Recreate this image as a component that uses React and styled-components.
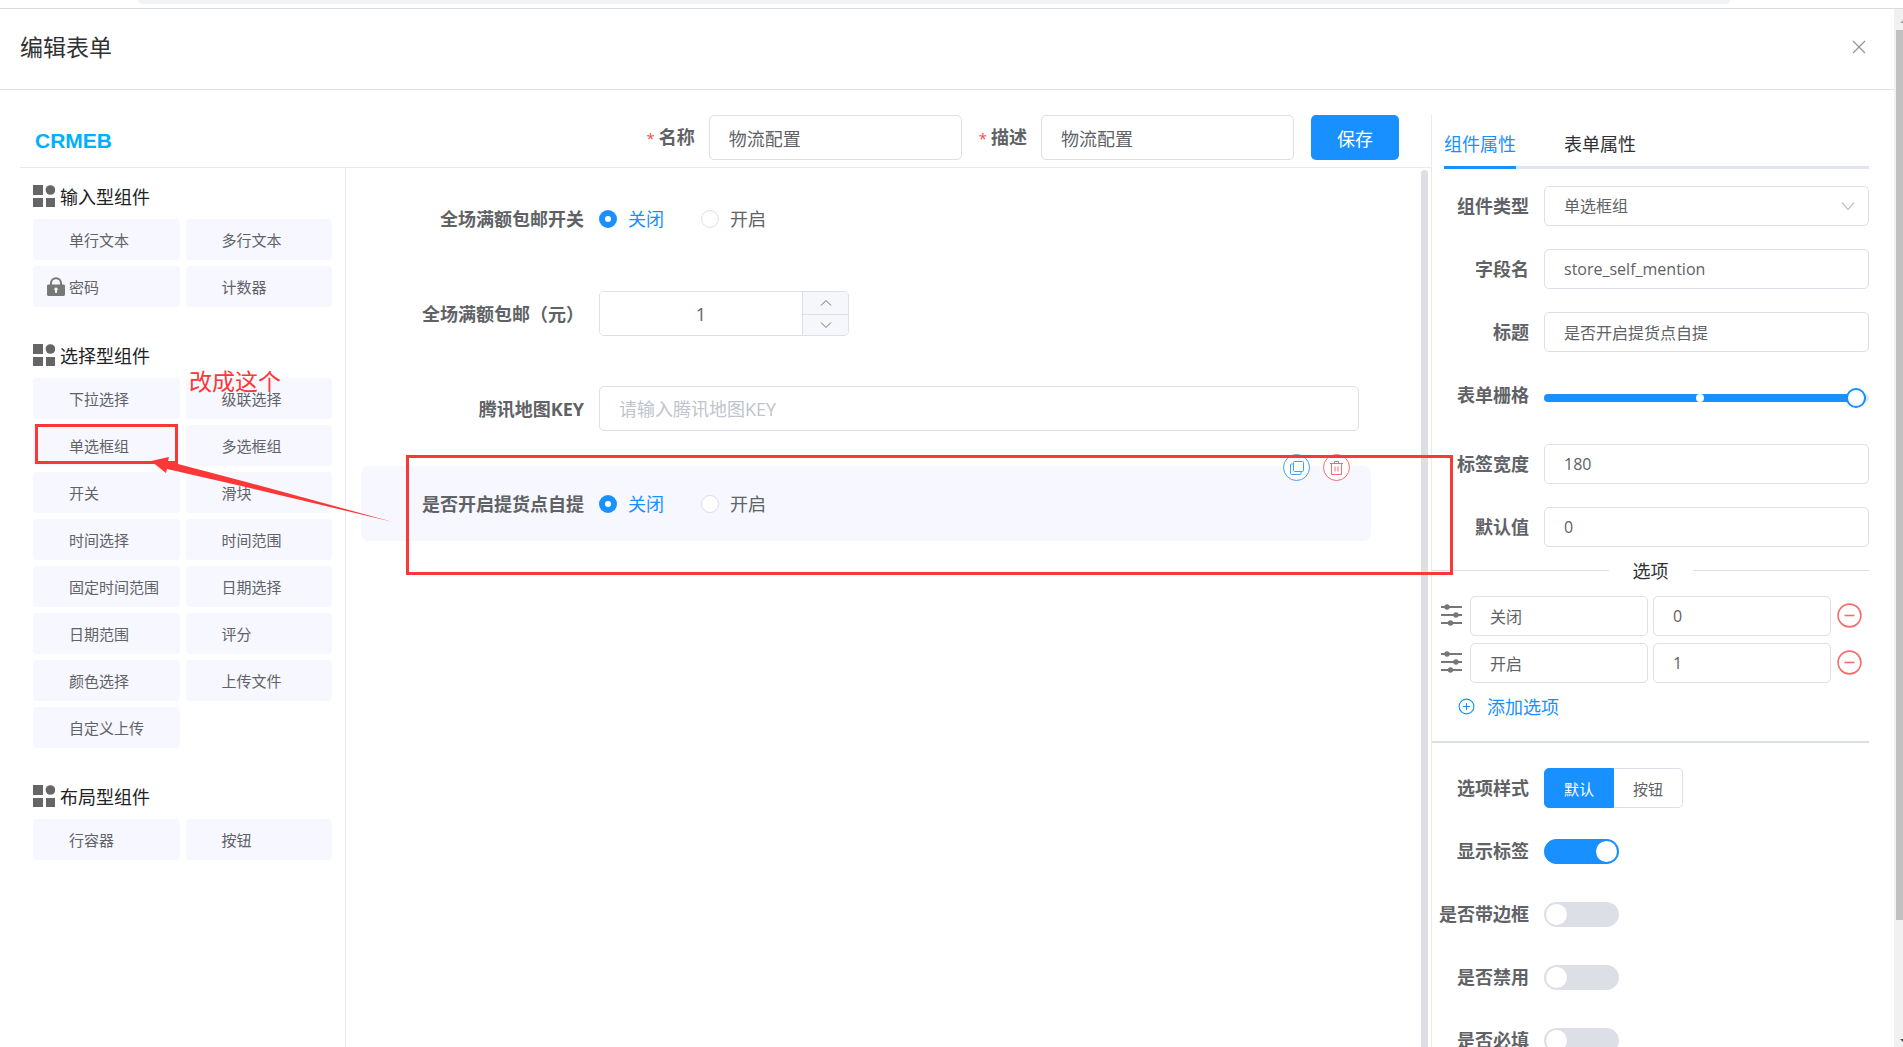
import React, { useId } from "react";
import styled, { createGlobalStyle, css } from "styled-components";

const BLUE = "#1890ff";
const RED = "#f56c6c";
const MARK = "#fb3838";
const BORDER = "#dcdfe6";
const TEXT = "#606266";

const Global = createGlobalStyle`
  *, *::before, *::after { box-sizing: border-box; }
  body { margin: 0; background: #fff; }
  body, button, input, select {
    font-family: "Open Sans", "Noto Sans CJK SC", sans-serif;
    font-size: 18px;
    color: ${TEXT};
  }
  button { padding: 0; border: 0; background: none; cursor: pointer; }
`;

const Shell = styled.div`
  position: relative;
  display: flex;
  flex-direction: column;
  height: 100vh;
  overflow: hidden;
`;

const BrowserEdge = styled.div`
  flex: none;
  height: 9px;
  padding: 0 173px 0 138px;
  border-bottom: 1px solid #dadbdc;
`;

const AddressBar = styled.div`
  height: 4px;
  border-radius: 0 0 8px 8px;
  background: #f1f3f4;
`;

const Viewport = styled.div`
  flex: 1;
  min-height: 0;
  display: flex;
`;

const Drawer = styled.div`
  flex: 1;
  min-width: 0;
  display: flex;
  flex-direction: column;
`;

const PageScrollbar = styled.div`
  flex: none;
  width: 9px;
  display: flex;
  flex-direction: column;
  justify-content: space-between;
  padding-left: 2px;
  overflow: hidden;
  background: #f1f1f1;
`;

const PageThumb = styled.div`
  flex: 1;
  margin-bottom: 106px;
  background: #c1c1c1;
`;

const ScrollArrow = styled.svg`
  flex: none;
  width: 18px;
  height: 21px;
  fill: ${(p) => (p.$dim ? "#a3a3a3" : "#505050")};
`;

const DrawerHeader = styled.header`
  flex: none;
  display: flex;
  align-items: center;
  justify-content: space-between;
  height: 81px;
  padding: 0 27px 4px 20px;
  border-bottom: 1px solid ${BORDER};
`;

const Title = styled.h1`
  margin: 0;
  font-size: 23px;
  font-weight: 400;
  line-height: 30px;
  color: #303133;
`;

const CloseButton = styled.button`
  display: flex;
  color: #909399;
`;

const Body = styled.div`
  flex: 1;
  min-height: 0;
  display: grid;
  grid-template-columns: minmax(0, 1fr) 438px;
  padding: 25px 25px 0 20px;
  overflow: hidden;
`;

const Designer = styled.main`
  display: flex;
  flex-direction: column;
  min-height: 0;
`;

const TopBar = styled.div`
  flex: none;
  display: flex;
  align-items: flex-start;
  justify-content: space-between;
  height: 53px;
  padding: 0 32px 0 15px;
  border-bottom: 1px solid #ebe8e9;
`;

const Logo = styled.div`
  font-family: "Liberation Sans", Arial, sans-serif;
  font-size: 21px;
  font-weight: 700;
  line-height: 51px;
  color: #00afff;
`;

const TopForm = styled.form`
  display: flex;
  align-items: center;
  gap: 17px;
`;

const TopField = styled.div`
  display: flex;
  align-items: center;
  gap: 14px;
`;

const Label = styled.label`
  font-size: 18px;
  font-weight: 700;
  line-height: 40px;
  white-space: nowrap;
`;

const Star = styled.span`
  margin-right: 4px;
  font-size: 15px;
  font-weight: 400;
  color: #ff4949;
`;

const boxStyle = css`
  border: 1px solid ${BORDER};
  border-radius: 5px;
  background: #fff;
  outline: none;
`;

const Input = styled.input`
  ${boxStyle}
  width: ${(p) => p.$width || "100%"};
  min-width: 0;
  height: ${(p) => (p.$small ? "40px" : "45px")};
  padding: 0 19px;
  font-size: ${(p) => (p.$small ? "16px" : "18px")};
  &::placeholder { color: #c0c4cc; opacity: 1; }
`;

const SaveButton = styled.button`
  width: 88px;
  height: 45px;
  border-radius: 5px;
  background: ${BLUE};
  color: #fff;
`;

const Workspace = styled.div`
  flex: 1;
  min-height: 0;
  display: flex;
`;

const Palette = styled.aside`
  flex: none;
  display: flex;
  flex-direction: column;
  gap: 37px;
  width: 326px;
  padding: 17px 13px 0;
  border-right: 1px solid #f1e8e8;
`;

const PaletteHeading = styled.h2`
  display: flex;
  align-items: center;
  gap: 5px;
  height: 22px;
  margin: 0 0 12px;
  font-size: 18px;
  font-weight: 400;
  color: #222;
`;

const PaletteGrid = styled.div`
  display: grid;
  grid-template-columns: 1fr 1fr;
  gap: 6px;
`;

const PaletteItem = styled.button`
  display: grid;
  grid-template-columns: 18px 1fr;
  gap: 4px;
  align-items: center;
  height: 41px;
  padding: 0 0 0 14px;
  border-radius: 4px;
  background: #f6f7ff;
  font-size: 15px;
  text-align: left;
  white-space: nowrap;
`;

const Canvas = styled.section`
  flex: 1;
  min-width: 0;
  display: flex;
  padding: 2px 3px 0 15px;
`;

const CanvasRows = styled.div`
  flex: 1;
  min-width: 0;
  display: flex;
  flex-direction: column;
  gap: 20px;
  padding: 11px 50px 0 0;
`;

const CanvasScrollbar = styled.div`
  flex: none;
  width: 7px;
  border-radius: 4px 4px 0 0;
  background: #dddfe2;
`;

const CanvasRow = styled.div`
  position: relative;
  display: grid;
  grid-template-columns: 223px minmax(0, 1fr);
  gap: 15px;
  align-items: center;
  height: 75px;
  padding-right: 12px;
  border-radius: 8px;
  background: ${(p) => (p.$active ? "#f6f7ff" : "none")};
`;

const CanvasLabel = styled(Label)`
  text-align: right;
`;

const RadioRow = styled.div`
  display: flex;
  gap: 37px;
`;

const RadioLabel = styled.label`
  display: flex;
  align-items: center;
  gap: 11px;
  line-height: 24px;
  &:has(input:checked) { color: ${BLUE}; }
`;

const RadioInput = styled.input`
  appearance: none;
  width: 18px;
  height: 18px;
  margin: 0;
  border: 1px solid ${BORDER};
  border-radius: 50%;
  background: #fff;
  &:checked { border: 6px solid ${BLUE}; }
`;

const NumberBox = styled.div`
  ${boxStyle}
  display: grid;
  grid-template-columns: 1fr 46px;
  width: 250px;
  height: 45px;
  overflow: hidden;
`;

const NumberInput = styled.input`
  min-width: 0;
  border: 0;
  text-align: center;
  outline: none;
`;

const Stepper = styled.div`
  display: grid;
  grid-template-rows: 1fr 1fr;
  border-left: 1px solid ${BORDER};
  background: #f5f7fa;
`;

const StepButton = styled.button`
  display: flex;
  align-items: center;
  justify-content: center;
  & + & { border-top: 1px solid ${BORDER}; }
`;

const RowTools = styled.div`
  position: absolute;
  top: -12px;
  right: 21px;
  display: flex;
  gap: 13px;
`;

const RoundButton = styled.button`
  display: flex;
  align-items: center;
  justify-content: center;
  width: 27px;
  height: 27px;
  border: 1px solid currentColor;
  border-radius: 50%;
  background: #fff;
  color: ${(p) => (p.$danger ? RED : "#409eff")};
`;

const Inspector = styled.aside`
  min-height: 0;
  border-left: 1px solid #f1e8e8;
`;

const Tabs = styled.div`
  display: flex;
  gap: 48px;
  height: 54px;
  margin-left: 12px;
  background: linear-gradient(#dfe4ed, #dfe4ed) bottom / 100% 3px no-repeat;
`;

const Tab = styled.button`
  padding-top: 4px;
  border-bottom: 3px solid ${(p) => (p.$active ? BLUE : "transparent")};
  color: ${(p) => (p.$active ? BLUE : "#303133")};
`;

const Props = styled.div`
  display: flex;
  flex-direction: column;
  gap: 23px;
  padding-top: ${(p) => p.$top};
`;

const PropRow = styled.div`
  display: grid;
  grid-template-columns: 97px minmax(0, 1fr);
  gap: 15px;
  align-items: start;
`;

const PropLabel = styled(Label)`
  text-align: right;
`;

const SelectWrap = styled.div`
  position: relative;
`;

const Select = styled.select`
  ${boxStyle}
  appearance: none;
  width: 100%;
  height: 40px;
  padding: 0 19px;
  font-size: 16px;
`;

const SelectArrow = styled.svg`
  position: absolute;
  top: 13px;
  right: 14px;
  pointer-events: none;
`;

const SliderArea = styled.div`
  display: flex;
  align-items: center;
  height: 46px;
`;

const SliderTrack = styled.div`
  position: relative;
  display: flex;
  align-items: center;
  width: 100%;
  height: 8px;
  padding-right: 3px;
  border-radius: 4px;
  background: #e4e7ed;
`;

const SliderStop = styled.span`
  position: absolute;
  left: 48%;
  width: 8px;
  height: 8px;
  margin-left: -4px;
  border-radius: 50%;
  background: #fff;
`;

const Range = styled.input`
  appearance: none;
  width: 100%;
  height: 8px;
  margin: 0;
  border-radius: 4px;
  background: ${BLUE};
  &::-webkit-slider-thumb {
    appearance: none;
    width: 20px;
    height: 20px;
    border: 2px solid ${BLUE};
    border-radius: 50%;
    background: #fff;
  }
`;

const Divider = styled.div`
  display: grid;
  grid-template-columns: 1fr auto 1fr;
  gap: 24px;
  align-items: center;
  height: 46px;
  color: #303133;
  &::before, &::after { content: ""; height: 1px; background: ${BORDER}; }
`;

const OptionList = styled.div`
  display: flex;
  flex-direction: column;
  gap: 7px;
  padding: 3px 7px 0 9px;
`;

const OptionRow = styled.div`
  display: grid;
  grid-template-columns: 24px 1fr 1fr 26px;
  column-gap: 5px;
  align-items: center;
  & > svg { margin-top: -2px; }
`;

const RemoveButton = styled.button`
  display: flex;
  margin: -2px 0 0 1px;
  color: ${RED};
`;

const AddButton = styled.button`
  display: flex;
  align-items: center;
  gap: 12px;
  height: 46px;
  margin-left: 26px;
  color: ${BLUE};
`;

const SectionLine = styled.hr`
  height: 2px;
  margin: 12px 0 0;
  border: 0;
  background: ${BORDER};
`;

const Segmented = styled.div`
  display: flex;
  width: max-content;
  height: 40px;
`;

const Segment = styled.label`
  position: relative;
  display: flex;
  align-items: center;
  padding: 0 19px;
  border: 1px solid ${BORDER};
  font-size: 15px;
  &:first-child { border-radius: 5px 0 0 5px; }
  &:last-child { border-left: 0; border-radius: 0 5px 5px 0; }
  &:has(input:checked) { border-color: ${BLUE}; background: ${BLUE}; color: #fff; }
`;

const SegmentInput = styled.input`
  position: absolute;
  inset: 0;
  margin: 0;
  opacity: 0;
`;

const SwitchArea = styled.div`
  display: flex;
  align-items: center;
  height: 40px;
`;

const Switch = styled.input`
  appearance: none;
  display: flex;
  align-items: center;
  width: 75px;
  height: 25px;
  margin: 0;
  padding: 0 2px;
  border-radius: 13px;
  background: ${BORDER};
  &::before {
    content: "";
    width: 21px;
    height: 21px;
    border-radius: 50%;
    background: #fff;
  }
  &:checked { justify-content: flex-end; background: ${BLUE}; }
`;

const Annotations = styled.div`
  position: absolute;
  inset: 0;
  pointer-events: none;
`;

const MarkBox = styled.div`
  position: absolute;
  left: ${(p) => p.$x}px;
  top: ${(p) => p.$y}px;
  width: ${(p) => p.$w}px;
  height: ${(p) => p.$h}px;
  border: 3px solid ${MARK};
`;

const MarkText = styled.span`
  position: absolute;
  left: 189px;
  top: 366px;
  font-size: 23px;
  line-height: 30px;
  color: ${MARK};
`;

const MarkArrow = styled.svg`
  position: absolute;
  left: 0;
  top: 0;
`;

const GridIcon = () => (
  <svg width="22" height="22" viewBox="0 0 22 22" fill="#666">
    <path d="M0 0h10v10H0zM0 13h10v9H0zM13 13h9v9h-9z" />
    <circle cx="17.4" cy="5" r="4.8" />
  </svg>
);

const LockIcon = () => (
  <svg width="18" height="19" viewBox="0 0 18 19">
    <path d="M4 8V6.2a5 5 0 0 1 10 0V8" fill="none" stroke="#777" strokeWidth="2" />
    <rect y="7.4" width="18" height="11.6" rx="1.4" fill="#777" />
    <path d="M9 10.4a1.8 1.8 0 0 1 .9 3.3V16H8.1v-2.3A1.8 1.8 0 0 1 9 10.4z" fill="#f6f7ff" />
  </svg>
);

const DragIcon = () => (
  <svg width="21" height="22" viewBox="0 0 21 22" fill="#777" stroke="#777" strokeWidth="2">
    <path d="M0 3h21M0 11h21M0 19h21" />
    <g stroke="none">
      <circle cx="6" cy="3" r="2.7" />
      <circle cx="15" cy="11" r="2.7" />
      <circle cx="9.5" cy="19" r="2.7" />
    </g>
  </svg>
);

const MinusIcon = () => (
  <svg width="25" height="25" viewBox="0 0 25 25" fill="none" stroke="currentColor" strokeWidth="1.6">
    <circle cx="12.5" cy="12.5" r="11.4" />
    <path d="M7.5 12.5h10" />
  </svg>
);

const PlusIcon = () => (
  <svg width="17" height="17" viewBox="0 0 17 17" fill="none" stroke="currentColor" strokeWidth="1.1">
    <circle cx="8.5" cy="8.5" r="7.4" />
    <path d="M5 8.5h7M8.5 5v7" />
  </svg>
);

const CopyIcon = () => (
  <svg width="14" height="14" viewBox="0 0 14 14" fill="none" stroke="currentColor">
    <rect x="3.5" y="0.5" width="10" height="10" rx="1" />
    <path d="M3 3H1.5a1 1 0 0 0-1 1v8.5a1 1 0 0 0 1 1H10a1 1 0 0 0 1-1V11" />
  </svg>
);

const TrashIcon = () => (
  <svg width="13" height="14" viewBox="0 0 13 14" fill="none" stroke="currentColor">
    <path d="M0 2.5h13M4.5 2V.5h4V2M1.5 2.5v11h10v-11M5 5.5v5M8 5.5v5" />
  </svg>
);

const Chevron = ({ up }) => (
  <svg width="12" height="8" viewBox="0 0 12 8" fill="none" stroke="#707378">
    <path d={up ? "M1 6.5l5-5 5 5" : "M1 1.5l5 5 5-5"} />
  </svg>
);

const paletteGroups = [
  { title: "输入型组件", items: ["单行文本", "多行文本", "密码", "计数器"] },
  {
    title: "选择型组件",
    items: [
      "下拉选择", "级联选择", "单选框组", "多选框组", "开关", "滑块", "时间选择", "时间范围",
      "固定时间范围", "日期选择", "日期范围", "评分", "颜色选择", "上传文件", "自定义上传",
    ],
  },
  { title: "布局型组件", items: ["行容器", "按钮"] },
];

const switches = [
  ["显示标签", true],
  ["是否带边框", false],
  ["是否禁用", false],
  ["是否必填", false],
];

function RequiredField({ label, value }) {
  const id = useId();
  return (
    <TopField>
      <Label htmlFor={id}><Star>*</Star>{label}</Label>
      <Input id={id} $width="253px" defaultValue={value} />
    </TopField>
  );
}

function RadioField({ label, active, children }) {
  const name = useId();
  return (
    <CanvasRow $active={active} role="radiogroup" aria-label={label}>
      <CanvasLabel as="span">{label}</CanvasLabel>
      <RadioRow>
        <RadioLabel><RadioInput type="radio" name={name} defaultChecked />关闭</RadioLabel>
        <RadioLabel><RadioInput type="radio" name={name} />开启</RadioLabel>
      </RadioRow>
      {children}
    </CanvasRow>
  );
}

function TextProp({ label, value }) {
  const id = useId();
  return (
    <PropRow>
      <PropLabel htmlFor={id}>{label}</PropLabel>
      <Input id={id} $small defaultValue={value} />
    </PropRow>
  );
}

function SwitchProp({ label, on }) {
  const id = useId();
  return (
    <PropRow>
      <PropLabel htmlFor={id}>{label}</PropLabel>
      <SwitchArea><Switch id={id} type="checkbox" defaultChecked={on} /></SwitchArea>
    </PropRow>
  );
}

function OptionItem({ name, value }) {
  return (
    <OptionRow>
      <DragIcon />
      <Input $small defaultValue={name} aria-label="选项名" />
      <Input $small defaultValue={value} aria-label="选项值" />
      <RemoveButton type="button" aria-label="删除选项"><MinusIcon /></RemoveButton>
    </OptionRow>
  );
}

export default function App() {
  return (
    <Shell>
      <Global />
      <BrowserEdge><AddressBar /></BrowserEdge>
      <Viewport>
        <Drawer>
          <DrawerHeader>
            <Title>编辑表单</Title>
            <CloseButton type="button" aria-label="关闭">
              <svg width="16" height="16" viewBox="0 0 16 16" fill="none" stroke="currentColor" strokeWidth="1.2">
                <path d="M2 2l12 12M14 2L2 14" />
              </svg>
            </CloseButton>
          </DrawerHeader>
          <Body>
            <Designer>
              <TopBar>
                <Logo>CRMEB</Logo>
                <TopForm>
                  <RequiredField label="名称" value="物流配置" />
                  <RequiredField label="描述" value="物流配置" />
                  <SaveButton type="button">保存</SaveButton>
                </TopForm>
              </TopBar>
              <Workspace>
                <Palette>
                  {paletteGroups.map((group) => (
                    <section key={group.title}>
                      <PaletteHeading><GridIcon />{group.title}</PaletteHeading>
                      <PaletteGrid>
                        {group.items.map((item) => (
                          <PaletteItem type="button" key={item}>
                            {item === "密码" ? <LockIcon /> : <span />}
                            {item}
                          </PaletteItem>
                        ))}
                      </PaletteGrid>
                    </section>
                  ))}
                </Palette>
                <Canvas>
                  <CanvasRows>
                    <RadioField label="全场满额包邮开关" />
                    <CanvasRow>
                      <CanvasLabel htmlFor="free-amount">全场满额包邮（元）</CanvasLabel>
                      <NumberBox>
                        <NumberInput id="free-amount" inputMode="numeric" defaultValue="1" />
                        <Stepper>
                          <StepButton type="button" aria-label="增加"><Chevron up /></StepButton>
                          <StepButton type="button" aria-label="减少"><Chevron /></StepButton>
                        </Stepper>
                      </NumberBox>
                    </CanvasRow>
                    <CanvasRow>
                      <CanvasLabel htmlFor="map-key">腾讯地图KEY</CanvasLabel>
                      <Input id="map-key" placeholder="请输入腾讯地图KEY" />
                    </CanvasRow>
                    <RadioField label="是否开启提货点自提" active>
                      <RowTools>
                        <RoundButton type="button" aria-label="复制"><CopyIcon /></RoundButton>
                        <RoundButton type="button" aria-label="删除" $danger><TrashIcon /></RoundButton>
                      </RowTools>
                    </RadioField>
                  </CanvasRows>
                  <CanvasScrollbar />
                </Canvas>
              </Workspace>
            </Designer>
            <Inspector>
              <Tabs role="tablist">
                <Tab type="button" role="tab" aria-selected="true" $active>组件属性</Tab>
                <Tab type="button" role="tab" aria-selected="false">表单属性</Tab>
              </Tabs>
              <Props $top="17px">
                <PropRow>
                  <PropLabel htmlFor="kind">组件类型</PropLabel>
                  <SelectWrap>
                    <Select id="kind" defaultValue="单选框组"><option>单选框组</option></Select>
                    <SelectArrow width="14" height="14" viewBox="0 0 14 14" fill="none" stroke="#c0c4cc" strokeWidth="1.2">
                      <path d="M1 3.5l6 7 6-7" />
                    </SelectArrow>
                  </SelectWrap>
                </PropRow>
                <TextProp label="字段名" value="store_self_mention" />
                <TextProp label="标题" value="是否开启提货点自提" />
                <PropRow>
                  <PropLabel htmlFor="span">表单栅格</PropLabel>
                  <SliderArea>
                    <SliderTrack>
                      <Range id="span" type="range" min="1" max="24" defaultValue="24" />
                      <SliderStop />
                    </SliderTrack>
                  </SliderArea>
                </PropRow>
                <TextProp label="标签宽度" value="180" />
                <TextProp label="默认值" value="0" />
              </Props>
              <Divider>选项</Divider>
              <OptionList>
                <OptionItem name="关闭" value="0" />
                <OptionItem name="开启" value="1" />
              </OptionList>
              <AddButton type="button"><PlusIcon />添加选项</AddButton>
              <SectionLine />
              <Props $top="25px">
                <PropRow role="radiogroup" aria-label="选项样式">
                  <PropLabel as="span">选项样式</PropLabel>
                  <Segmented>
                    <Segment><SegmentInput type="radio" name="style" defaultChecked />默认</Segment>
                    <Segment><SegmentInput type="radio" name="style" />按钮</Segment>
                  </Segmented>
                </PropRow>
                {switches.map(([label, on]) => <SwitchProp key={label} label={label} on={on} />)}
              </Props>
            </Inspector>
          </Body>
        </Drawer>
        <PageScrollbar>
          <ScrollArrow $dim viewBox="0 0 18 21"><path d="M4 14l4-4 4 4z" /></ScrollArrow>
          <PageThumb />
          <ScrollArrow viewBox="0 0 18 21"><path d="M4 13l4 4 4-4z" /></ScrollArrow>
        </PageScrollbar>
      </Viewport>
      <Annotations>
        <MarkBox $x={35} $y={424} $w={143} $h={40} />
        <MarkBox $x={406} $y={455} $w={1047} $h={120} />
        <MarkText>改成这个</MarkText>
        <MarkArrow width="400" height="530" viewBox="0 0 400 530" fill={MARK}>
          <path d="M151 461L169 457L168 461L178 464L250 483L393 522L250 488L167 469L166 473Z" />
        </MarkArrow>
      </Annotations>
    </Shell>
  );
}
